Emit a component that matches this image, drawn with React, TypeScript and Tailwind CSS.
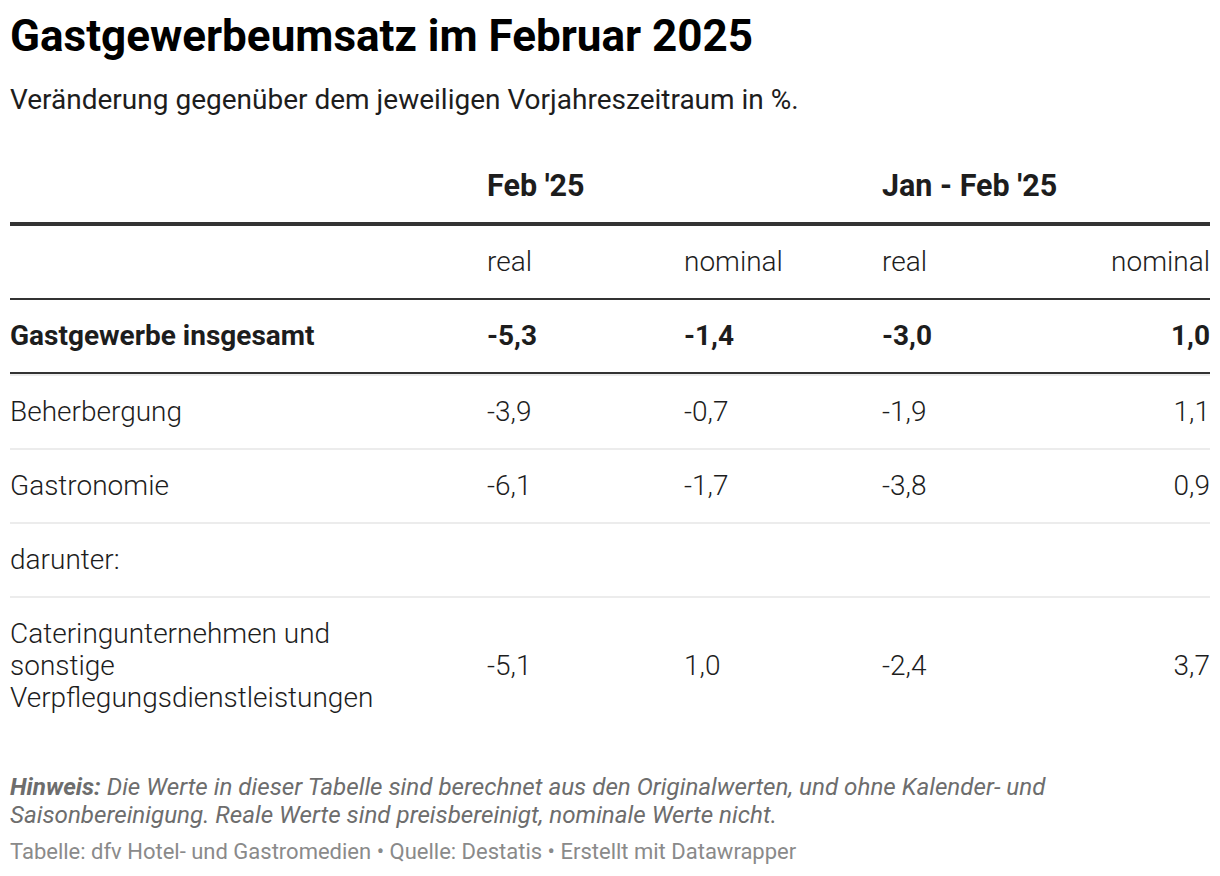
import React from "react";

const rows = [
  { label: "Beherbergung", v: ["-3,9", "-0,7", "-1,9", "1,1"] },
  { label: "Gastronomie", v: ["-6,1", "-1,7", "-3,8", "0,9"] },
];

export default function App() {
  return (
    <div className="w-[1220px] h-[876px] bg-white px-[10px] pt-[10px] text-[#1d1d1d]" style={{ fontFamily: "Roboto, sans-serif" }}>
      <h1 className="text-[44px] font-bold leading-[52px] text-black">Gastgewerbeumsatz im Februar 2025</h1>
      <p className="mt-[21px] text-[28px] leading-[34px] text-[#1d1d1d]">Veränderung gegenüber dem jeweiligen Vorjahreszeitraum in %.</p>

      <div className="mt-[33px] w-[1200px] text-[28px]">
        <div className="grid grid-cols-[477px_197px_198px_1fr] items-center h-[76px] border-b-[4px] border-[#333] text-[30.5px]">
          <div />
          <div className="font-bold">Feb '25</div>
          <div />
          <div className="font-bold">Jan - Feb '25</div>
        </div>
        <div className="grid grid-cols-[477px_197px_198px_1fr_1fr] items-center h-[74px] border-b-[2px] border-[#333] font-light">
          <div />
          <div>real</div>
          <div>nominal</div>
          <div>real</div>
          <div className="text-right">nominal</div>
        </div>
        <div className="grid grid-cols-[477px_197px_198px_1fr_1fr] items-center h-[74px] border-b-[2px] border-[#333] font-bold">
          <div>Gastgewerbe insgesamt</div>
          <div>-5,3</div>
          <div>-1,4</div>
          <div>-3,0</div>
          <div className="text-right">1,0</div>
        </div>
        {rows.map((r) => (
          <div key={r.label} className="grid grid-cols-[477px_197px_198px_1fr_1fr] items-center h-[74px] border-t-[2px] border-t-[#ececec] font-light">
            <div>{r.label}</div>
            <div>{r.v[0]}</div>
            <div>{r.v[1]}</div>
            <div>{r.v[2]}</div>
            <div className="text-right">{r.v[3]}</div>
          </div>
        ))}
        <div className="grid grid-cols-[477px_1fr] items-center h-[74px] border-t-[2px] border-t-[#ececec] font-light">
          <div>darunter:</div>
          <div />
        </div>
        <div className="grid grid-cols-[477px_197px_198px_1fr_1fr] items-center h-[138px] border-t-[2px] border-t-[#ececec] font-light leading-[32px]">
          <div>Cateringunternehmen und<br />sonstige<br />Verpflegungsdienstleistungen</div>
          <div>-5,1</div>
          <div>1,0</div>
          <div>-2,4</div>
          <div className="text-right">3,7</div>
        </div>
      </div>

      <div className="mt-[39px] text-[24.2px] leading-[28px] italic text-[#6d6d6d]">
        <span className="font-bold">Hinweis:</span> Die Werte in dieser Tabelle sind berechnet aus den Originalwerten, und ohne Kalender- und
        <br />
        Saisonbereinigung. Reale Werte sind preisbereinigt, nominale Werte nicht.
      </div>
      <div className="mt-[10px] text-[22px] leading-[26px] text-[#8a8a8a]">
        Tabelle: dfv Hotel- und Gastromedien • Quelle: Destatis • Erstellt mit Datawrapper
      </div>
    </div>
  );
}
